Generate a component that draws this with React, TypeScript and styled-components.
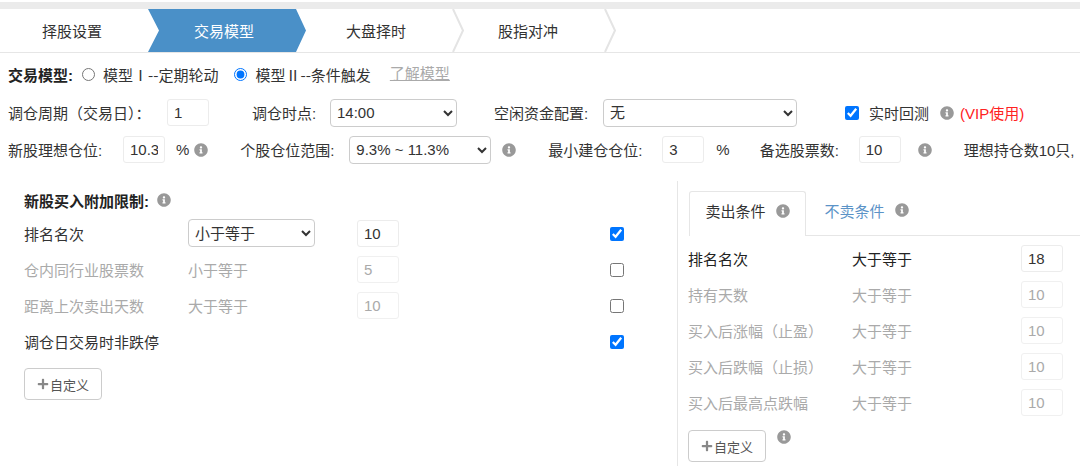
import styled, { createGlobalStyle } from 'styled-components';
import { FaInfoCircle, FaPlus } from 'react-icons/fa';

const GlobalStyle = createGlobalStyle`
  html, body {
    margin: 0;
    padding: 0;
    background: #fff;
  }
  body, input, select, button {
    font-family: "Liberation Sans", "Noto Sans CJK SC", sans-serif;
  }
`;

const Page = styled.div`
  width: 1080px;
  height: 466px;
  overflow: hidden;
  padding-top: 2px;
  box-sizing: border-box;
  font-size: 15px;
  color: #333;
`;

const TopBar = styled.div`
  height: 7px;
  background: #ebebeb;
`;

const Wizard = styled.div`
  display: flex;
  height: 43px;
  border-bottom: 1px solid #e6e6e6;
  margin-bottom: 10px;
`;

const Step = styled.div<{ $first?: boolean; $active?: boolean }>`
  position: relative;
  flex: none;
  width: ${(p) => (p.$first ? 148 : 152)}px;
  padding-right: ${(p) => (p.$first ? 4 : 0)}px;
  box-sizing: border-box;
  display: flex;
  align-items: center;
  justify-content: center;
  font-size: 15px;
  color: ${(p) => (p.$active ? '#fff' : '#333')};
  > span {
    position: relative;
    z-index: 2;
  }
`;

const ActiveShape = styled.svg`
  position: absolute;
  left: 0;
  top: 0;
  width: 160px;
  height: 43px;
`;

const StepArrow = styled.svg`
  position: absolute;
  right: -12px;
  top: 0;
  width: 12px;
  height: 43px;
  z-index: 1;
`;

const Row = styled.div<{ $h?: number; $mb?: number }>`
  display: flex;
  align-items: center;
  height: ${(p) => p.$h ?? 37}px;
  margin-bottom: ${(p) => p.$mb ?? 0}px;
  padding-left: 8px;
  white-space: nowrap;
`;

const Text = styled.span<{ $ml?: number; $w?: number }>`
  flex: none;
  margin-left: ${(p) => p.$ml ?? 0}px;
  width: ${(p) => (p.$w ? `${p.$w}px` : 'auto')};
`;

const Bold = styled.span`
  font-weight: 700;
  color: #222;
`;

const Radio = styled.input.attrs({ type: 'radio' })<{ $ml?: number }>`
  flex: none;
  width: 13px;
  height: 13px;
  margin: 0 8px 0 ${(p) => p.$ml ?? 0}px;
`;

const ModelName = styled.span`
  font-family: "Noto Sans CJK SC", "Liberation Sans", sans-serif;
`;

const LearnLink = styled.a`
  margin: -4px 0 0 19px;
  color: #aaa;
  text-decoration: underline;
`;

const NumberInput = styled.input<{ $ml?: number }>`
  flex: none;
  width: 42px;
  height: 27px;
  margin-left: ${(p) => p.$ml ?? 0}px;
  padding: 0 6px;
  box-sizing: border-box;
  border: 1px solid #ececec;
  border-radius: 3px;
  font-size: 15px;
  color: #333;
  background: #fff;
  &:disabled {
    border-color: #f0f0f0;
    color: #aaa;
  }
`;

const Select = styled.select<{ $w: number; $ml?: number }>`
  flex: none;
  width: ${(p) => p.$w}px;
  height: 28px;
  margin-left: ${(p) => p.$ml ?? 0}px;
  padding: 0 2px;
  box-sizing: border-box;
  border: 1px solid #ccc;
  border-radius: 4px;
  font-size: 15px;
  color: #333;
  background: #fff;
`;

const Check = styled.input.attrs({ type: 'checkbox' })<{ $ml?: number }>`
  flex: none;
  width: 14px;
  height: 14px;
  margin: 1px 0 0 ${(p) => p.$ml ?? 0}px;
`;

const Info = styled(FaInfoCircle)<{ $ml?: number }>`
  flex: none;
  width: 14px;
  height: 14px;
  margin-left: ${(p) => p.$ml ?? 0}px;
  color: #999;
`;

const Vip = styled.span`
  margin-left: 6px;
  color: #f22;
`;

const Panels = styled.div`
  display: flex;
  margin-top: 13px;
`;

const LeftPanel = styled.div`
  flex: none;
  width: 677px;
  padding: 8px 0 0 24px;
  box-sizing: border-box;
`;

const RightPanel = styled.div`
  flex: 1;
  height: 285px;
  border-left: 1px solid #e6e6e6;
  padding-top: 10px;
  box-sizing: border-box;
`;

const SectionTitle = styled.div`
  display: flex;
  align-items: center;
  height: 22px;
  margin-bottom: 4px;
  font-weight: 700;
  color: #222;
`;

const LimitRow = styled.div<{ $off?: boolean }>`
  display: grid;
  grid-template-columns: 164px 169px 253px 14px;
  align-items: center;
  height: 36px;
  color: ${(p) => (p.$off ? '#aaa' : '#333')};
`;

const AddButton = styled.button`
  display: inline-flex;
  align-items: center;
  justify-content: center;
  width: 78px;
  height: 32px;
  padding: 0;
  border: 1px solid #ccc;
  border-radius: 4px;
  background: #fff;
  font-size: 13px;
  color: #555;
  svg {
    width: 12px;
    height: 12px;
    color: #888;
    margin-right: 1px;
  }
`;

const LeftAdd = styled.div`
  margin-top: 9px;
`;

const Tabs = styled.div`
  display: flex;
  height: 44px;
  margin-left: 11px;
  border-bottom: 1px solid #e6e6e6;
`;

const Tab = styled.div<{ $active?: boolean }>`
  display: flex;
  align-items: center;
  justify-content: center;
  width: ${(p) => (p.$active ? 117 : 121)}px;
  height: ${(p) => (p.$active ? 45 : 44)}px;
  padding-bottom: 7px;
  box-sizing: border-box;
  color: ${(p) => (p.$active ? '#333' : '#5b93c7')};
  background: ${(p) => (p.$active ? '#fff' : 'transparent')};
  border: 1px solid ${(p) => (p.$active ? '#e6e6e6' : 'transparent')};
  border-bottom: 0;
  border-radius: 3px 3px 0 0;
`;

const SellRows = styled.div`
  margin-top: 4px;
  padding-left: 10px;
`;

const SellRow = styled.div<{ $off?: boolean }>`
  display: grid;
  grid-template-columns: 164px 169px 52px auto;
  align-items: center;
  height: 36px;
  white-space: nowrap;
  color: ${(p) => (p.$off ? '#aaa' : '#222')};
`;

const RightAdd = styled.div`
  display: flex;
  align-items: flex-start;
  margin: 10px 0 0 10px;
`;

const limits = [
  { name: '仓内同行业股票数', op: '小于等于', value: '5' },
  { name: '距离上次卖出天数', op: '大于等于', value: '10' },
];

const sells = [
  { name: '持有天数', unit: '' },
  { name: '买入后涨幅（止盈）', unit: '%' },
  { name: '买入后跌幅（止损）', unit: '%' },
  { name: '买入后最高点跌幅', unit: '%' },
];

const Arrow = () => (
  <StepArrow viewBox="0 0 12 43">
    <path d="M1 0 L11 21.5 L1 43" fill="none" stroke="#e4e4e4" strokeWidth="2" />
  </StepArrow>
);

const App = () => {
  return (
    <Page>
      <GlobalStyle />
      <TopBar />
      <Wizard>
        <Step $first>
          <span>择股设置</span>
        </Step>
        <Step $active>
          <ActiveShape viewBox="0 0 160 43">
            <path d="M0 0 H148 L158 21.5 L148 43 H0 L11 21.5 Z" fill="#4a90c8" />
          </ActiveShape>
          <span>交易模型</span>
        </Step>
        <Step>
          <Arrow />
          <span>大盘择时</span>
        </Step>
        <Step>
          <Arrow />
          <span>股指对冲</span>
        </Step>
      </Wizard>

      <Row $h={22} $mb={9}>
        <Bold>交易模型:</Bold>
        <Radio name="model" $ml={9} />
        <ModelName>模型Ⅰ--定期轮动</ModelName>
        <Radio name="model" $ml={16} defaultChecked />
        <ModelName>模型Ⅱ--条件触发</ModelName>
        <LearnLink>了解模型</LearnLink>
      </Row>

      <Row>
        <Text $w={159}>调仓周期（交易日）：</Text>
        <NumberInput defaultValue="1" />
        <Text $ml={43} $w={78}>调仓时点:</Text>
        <Select $w={127} defaultValue="14:00">
          <option>14:00</option>
        </Select>
        <Text $ml={37} $w={109}>空闲资金配置:</Text>
        <Select $w={194} defaultValue="无">
          <option>无</option>
        </Select>
        <Check $ml={48} defaultChecked />
        <Text $ml={10}>实时回测</Text>
        <Info $ml={11} />
        <Vip>(VIP使用)</Vip>
      </Row>

      <Row>
        <Text $w={115}>新股理想仓位:</Text>
        <NumberInput defaultValue="10.3" />
        <Text $ml={11}>%</Text>
        <Info $ml={5} />
        <Text $ml={32} $w={109}>个股仓位范围:</Text>
        <Select $w={142} defaultValue="r">
          <option value="r">9.3% ~ 11.3%</option>
        </Select>
        <Info $ml={11} />
        <Text $ml={32} $w={114}>最小建仓仓位:</Text>
        <NumberInput defaultValue="3" />
        <Text $ml={12}>%</Text>
        <Text $ml={30} $w={99}>备选股票数:</Text>
        <NumberInput defaultValue="10" />
        <Info $ml={17} />
        <Text $ml={32}>理想持仓数10只,</Text>
      </Row>

      <Panels>
        <LeftPanel>
          <SectionTitle>
            新股买入附加限制:
            <Info $ml={8} />
          </SectionTitle>
          <LimitRow>
            <span>排名名次</span>
            <Select $w={127} defaultValue="le">
              <option value="le">小于等于</option>
            </Select>
            <NumberInput defaultValue="10" />
            <Check defaultChecked />
          </LimitRow>
          {limits.map((item) => (
            <LimitRow $off key={item.name}>
              <span>{item.name}</span>
              <span>{item.op}</span>
              <NumberInput disabled defaultValue={item.value} />
              <Check />
            </LimitRow>
          ))}
          <LimitRow>
            <span>调仓日交易时非跌停</span>
            <span />
            <span />
            <Check defaultChecked />
          </LimitRow>
          <LeftAdd>
            <AddButton>
              <FaPlus />
              自定义
            </AddButton>
          </LeftAdd>
        </LeftPanel>

        <RightPanel>
          <Tabs>
            <Tab $active>
              卖出条件
              <Info $ml={10} />
            </Tab>
            <Tab>
              不卖条件
              <Info $ml={10} />
            </Tab>
          </Tabs>
          <SellRows>
            <SellRow>
              <span>排名名次</span>
              <span>大于等于</span>
              <NumberInput defaultValue="18" />
            </SellRow>
            {sells.map((item) => (
              <SellRow $off key={item.name}>
                <span>{item.name}</span>
                <span>大于等于</span>
                <NumberInput disabled defaultValue="10" />
                <Text $ml={10}>{item.unit}</Text>
              </SellRow>
            ))}
          </SellRows>
          <RightAdd>
            <AddButton>
              <FaPlus />
              自定义
            </AddButton>
            <Info $ml={11} />
          </RightAdd>
        </RightPanel>
      </Panels>
    </Page>
  );
};

export default App;
